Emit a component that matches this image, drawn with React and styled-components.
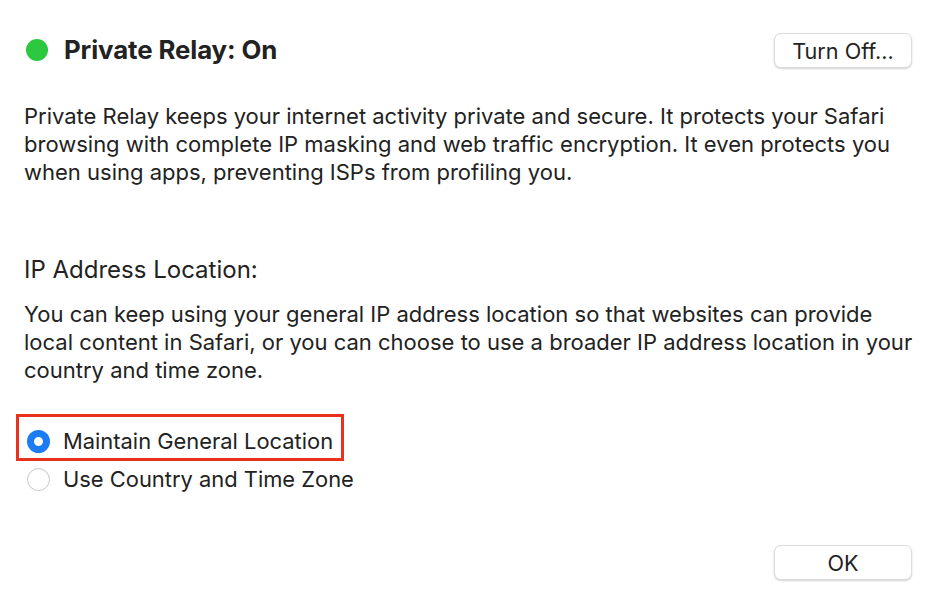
import React from 'react';
import styled, { createGlobalStyle } from 'styled-components';

const GlobalStyle = createGlobalStyle`
  html, body {
    margin: 0;
    padding: 0;
    background: #ffffff;
  }
  body {
    font-family: Inter, "Noto Sans", "Liberation Sans", sans-serif;
    color: #1f1f1f;
    -webkit-font-smoothing: antialiased;
  }
`;

const options = [
  { id: 'general', label: 'Maintain General Location', checked: true, highlight: true },
  { id: 'country', label: 'Use Country and Time Zone', checked: false },
];

function App() {
  return (
    <>
      <GlobalStyle />
      <Dialog>
        <Header>
          <Title>
            <StatusDot />
            Private Relay: On
          </Title>
          <Button type="button">Turn Off...</Button>
        </Header>

        <Text>
          Private Relay keeps your internet activity private and secure. It protects your Safari
          <br />
          browsing with complete IP masking and web traffic encryption. It even protects you
          <br />
          when using apps, preventing ISPs from profiling you.
        </Text>

        <SectionTitle>IP Address Location:</SectionTitle>

        <Text $tight>
          You can keep using your general IP address location so that websites can provide
          <br />
          local content in Safari, or you can choose to use a broader IP address location in your
          <br />
          country and time zone.
        </Text>

        <OptionList>
          {options.map(option => (
            <Option key={option.id} $highlight={option.highlight}>
              <Radio $checked={option.checked} />
              {option.label}
            </Option>
          ))}
        </OptionList>

        <Footer>
          <Button type="button">OK</Button>
        </Footer>
      </Dialog>
    </>
  );
}

export default App;

const Dialog = styled.div`
  display: flex;
  flex-direction: column;
  box-sizing: border-box;
  min-height: 100vh;
  padding: 33px 24px 24px 24px;
`;

const Header = styled.div`
  display: flex;
  align-items: center;
  justify-content: space-between;
`;

const Title = styled.h1`
  display: flex;
  align-items: center;
  gap: 16px;
  margin: -2px 0 0 2px;
  font-size: 25.8px;
  font-weight: 700;
  color: #222222;
  letter-spacing: -0.1px;
`;

const StatusDot = styled.span`
  width: 22px;
  height: 22px;
  border-radius: 50%;
  background: #2bc840;
`;

const Button = styled.button`
  width: 138px;
  height: 35px;
  box-sizing: border-box;
  border: 1px solid #dcdcdc;
  border-radius: 7px;
  background: #ffffff;
  box-shadow: 0 1px 2px rgba(0, 0, 0, 0.18);
  font-family: inherit;
  font-size: 21.6px;
  color: #222222;
  cursor: pointer;
`;

const Text = styled.p`
  margin: ${({ $tight }) => ($tight ? '15px 0 0 0' : '34px 0 0 0')};
  font-size: 22px;
  line-height: 28px;
  white-space: nowrap;
  color: #222222;
`;

const SectionTitle = styled.h2`
  margin: 69px 0 0 0;
  font-size: 24px;
  line-height: 30px;
  font-weight: 400;
  color: #222222;
`;

const OptionList = styled.div`
  display: flex;
  flex-direction: column;
  align-items: flex-start;
  margin-top: 38px;
`;

const Option = styled.label`
  position: relative;
  display: inline-flex;
  align-items: center;
  gap: 13px;
  height: 38px;
  padding-left: 3px;
  font-size: 21.9px;
  color: #222222;

  &::after {
    content: '';
    display: ${({ $highlight }) => ($highlight ? 'block' : 'none')};
    position: absolute;
    top: -8px;
    bottom: -1px;
    left: -8px;
    right: -11px;
    border: 3px solid #e8321d;
    pointer-events: none;
  }
`;

const Radio = styled.span`
  box-sizing: border-box;
  width: 23px;
  height: 23px;
  border-radius: 50%;
  flex-shrink: 0;
  background: #ffffff;
  border: ${({ $checked }) => ($checked ? '7px solid #1b7cf4' : '1px solid #c9c9c9')};
  box-shadow: ${({ $checked }) => ($checked ? 'none' : 'inset 0 1px 1px rgba(0,0,0,0.05)')};
`;

const Footer = styled.div`
  display: flex;
  justify-content: flex-end;
  margin-top: auto;
`;
